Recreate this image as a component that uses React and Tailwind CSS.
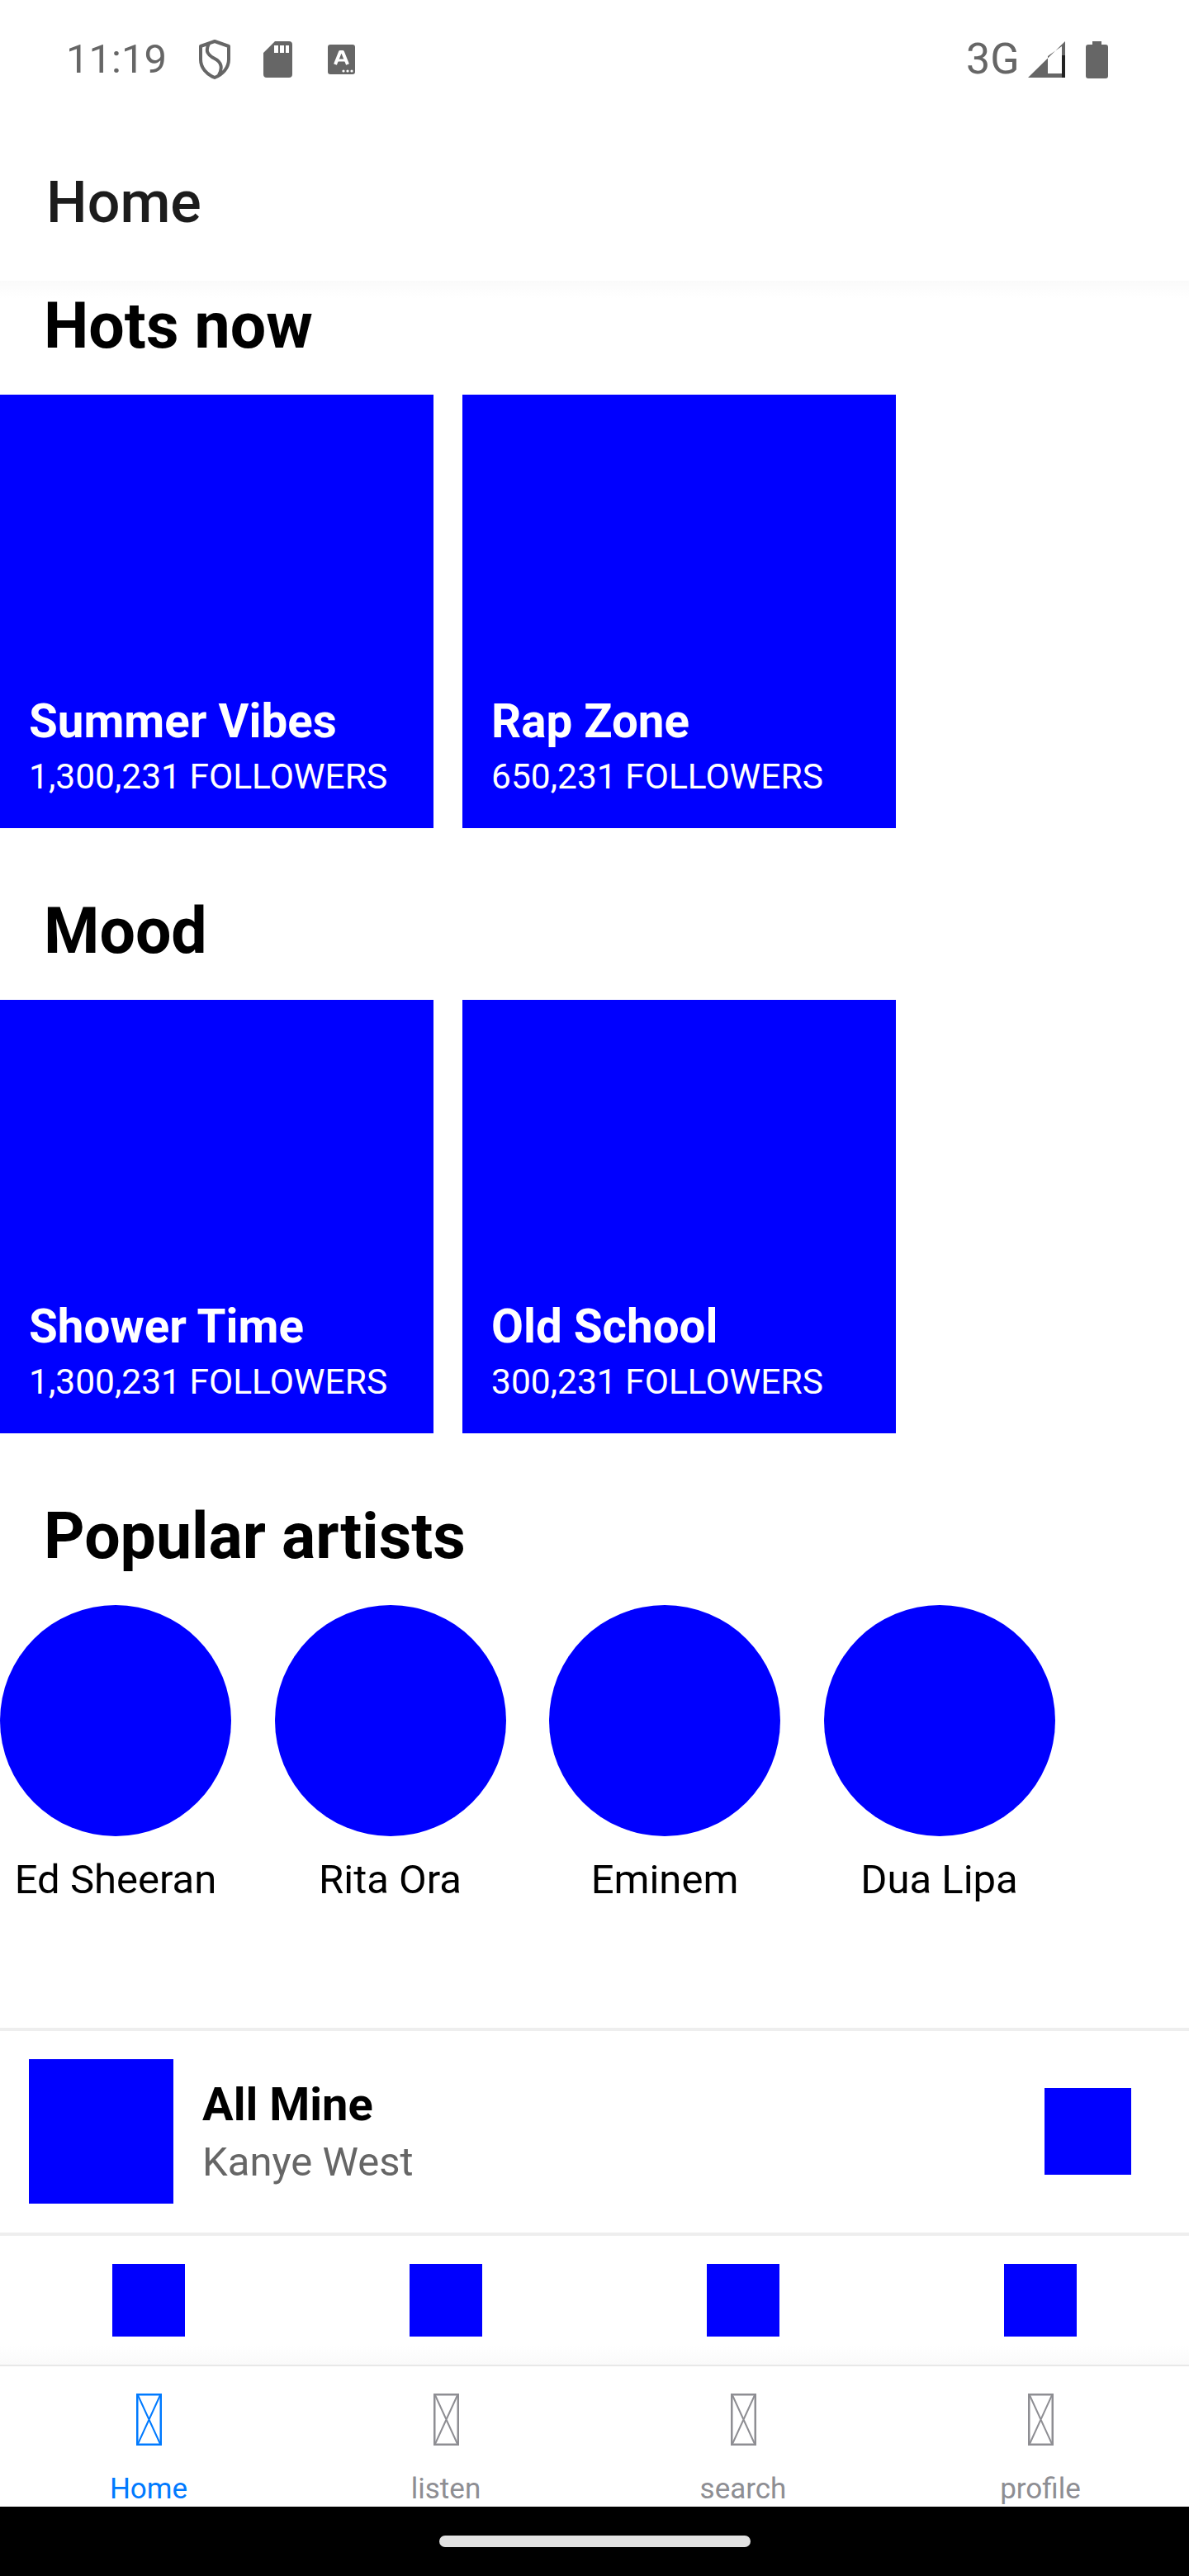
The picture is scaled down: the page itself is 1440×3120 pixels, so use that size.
import React from "react";

const hots = [
  { name: "Summer Vibes", followers: "1,300,231 FOLLOWERS" },
  { name: "Rap Zone", followers: "650,231 FOLLOWERS" },
];
const mood = [
  { name: "Shower Time", followers: "1,300,231 FOLLOWERS" },
  { name: "Old School", followers: "300,231 FOLLOWERS" },
];
const artists = ["Ed Sheeran", "Rita Ora", "Eminem", "Dua Lipa"];
const tabs = ["Home", "listen", "search", "profile"];

function StatusBar() {
  return (
    <div className="h-[97px] flex items-end text-[#666666]">
      <div className="w-full h-[50px] flex items-center justify-between pl-[80px] pr-[98px]">
        <div className="flex items-center">
          <span className="text-[49px] leading-[50px] w-[160px]">11:19</span>
          {/* shield */}
          <svg width="40" height="48" viewBox="0 0 40 48" fill="none">
            <path d="M20 2 L37 8 V24 C37 34 30 42 20 46 C10 42 3 34 3 24 V8 Z" stroke="#666666" strokeWidth="4" strokeLinejoin="round" />
            <path d="M13 5 C8 14 12 19 20 23 C28 27 30 34 25 43" stroke="#666666" strokeWidth="4" />
          </svg>
          {/* sd card */}
          <svg className="ml-[39px]" width="35" height="44" viewBox="0 0 35 44">
            <path fill="#666666" fillRule="evenodd" d="M14 0 H31 Q35 0 35 4 V40 Q35 44 31 44 H4 Q0 44 0 40 V14 Z M13 5 V14 H18 V5 Z M20 5 V14 H25 V5 Z M27 5 V14 H31 V5 Z" />
          </svg>
          {/* keyboard A */}
          <svg className="ml-[43px]" width="33" height="36" viewBox="0 0 33 36">
            <rect width="33" height="36" rx="3" fill="#666666" />
            <path d="M9 24 L15 9 H18 L24 24" stroke="#ffffff" strokeWidth="4" fill="none" strokeLinejoin="round" />
            <path d="M11 19 H22" stroke="#ffffff" strokeWidth="3" />
            <circle cx="19" cy="32" r="1.6" fill="#ffffff" />
            <circle cx="24" cy="32" r="1.6" fill="#ffffff" />
            <circle cx="29" cy="32" r="1.6" fill="#ffffff" />
          </svg>
        </div>
        <div className="flex items-center">
          <span className="text-[52px] leading-[50px] w-[75px]">3G</span>
          <svg width="45" height="44" viewBox="0 0 45 44">
            <path fill="#666666" d="M45 0 V44 H0 Z M24 18 V39 H41 V6 Z" fillRule="evenodd" />
            <rect x="41" y="17" width="4" height="27" fill="#222222" />
          </svg>
          <svg className="ml-[25px]" width="27" height="45" viewBox="0 0 27 45">
            <path fill="#666666" d="M8 0 H19 V4 H24 Q27 4 27 7 V42 Q27 45 24 45 H3 Q0 45 0 42 V7 Q0 4 3 4 H8 Z" />
          </svg>
        </div>
      </div>
    </div>
  );
}

function PlaylistRow({ items }) {
  return (
    <div className="flex gap-[35px]">
      {items.map((item) => (
        <div key={item.name} className="w-[525px] h-[525px] bg-[#0000ff] text-white flex flex-col justify-end pl-[35px] pb-[32px]">
          <div className="text-[56.5px] leading-[70px] font-bold">{item.name}</div>
          <div className="text-[42.5px] leading-[60px] mt-[2px]">{item.followers}</div>
        </div>
      ))}
    </div>
  );
}

function SectionTitle({ children, first }) {
  return (
    <h2 className={`${first ? "pt-[1px]" : "pt-[71px]"} pb-[29px] pl-[53px] text-[77px] leading-[108px] font-bold text-black`}>
      {children}
    </h2>
  );
}

function BrokenIcon({ color }) {
  return (
    <svg width="31" height="63" viewBox="0 0 31 63" fill="none" stroke={color}>
      <rect x="1.25" y="1.25" width="28.5" height="60.5" strokeWidth="2.5" />
      <path d="M2 2 L29 61 M29 2 L2 61" strokeWidth="2" />
    </svg>
  );
}

export default function App() {
  return (
    <div className="w-[1440px] h-[3120px] bg-white flex flex-col overflow-hidden font-['Roboto',sans-serif]">
      <StatusBar />
      <div className="h-[243px] pl-[56px] pt-[100px]">
        <div className="text-[70px] leading-[96px] font-medium text-[#1c1c1c]">Home</div>
      </div>

      <div className="h-[2116px] bg-gradient-to-b from-[#fafafa] to-white to-[1%]">
        <SectionTitle first>Hots now</SectionTitle>
        <PlaylistRow items={hots} />
        <SectionTitle>Mood</SectionTitle>
        <PlaylistRow items={mood} />
        <SectionTitle>Popular artists</SectionTitle>
        <div className="flex gap-[52.5px]">
          {artists.map((a) => (
            <div key={a} className="w-[280px] flex flex-col items-center">
              <div className="w-[280px] h-[280px] rounded-full bg-[#0000ff]" />
              <div className="mt-[23px] text-[49px] leading-[60px] text-black">{a}</div>
            </div>
          ))}
        </div>
      </div>

      {/* now playing */}
      <div className="h-[252px] border-y-[4px] border-[#eeeeee] flex items-center pl-[35px] pr-[70px] pb-[2px]">
        <div className="w-[175px] h-[175px] bg-[#0000ff]" />
        <div className="ml-[35px] flex-1 pt-[6px]">
          <div className="text-[56px] leading-[70px] font-bold text-black">All Mine</div>
          <div className="text-[49px] leading-[70px] text-[#666666]">Kanye West</div>
        </div>
        <div className="w-[105px] h-[105px] bg-[#0000ff]" />
      </div>

      {/* controls */}
      <div className="h-[156px] grid grid-cols-4 justify-items-center items-center bg-gradient-to-b from-white from-[85%] to-[#fafafa]">
        {[0, 1, 2, 3].map((i) => (
          <div key={i} className="w-[88px] h-[88px] bg-[#0000ff]" />
        ))}
      </div>

      {/* tabs */}
      <div className="h-[172px] border-t-[2px] border-[#e8e8e8] grid grid-cols-4 overflow-hidden">
        {tabs.map((t, i) => (
          <div key={t} className="flex flex-col items-center pt-[33px]">
            <BrokenIcon color={i === 0 ? "#007aff" : "#8e8e93"} />
            <div className={`mt-[29px] text-[35px] leading-[48px] ${i === 0 ? "text-[#007aff]" : "text-[#8e8e93]"}`}>{t}</div>
          </div>
        ))}
      </div>

      {/* android nav */}
      <div className="h-[84px] bg-black flex justify-center pt-[35px]">
        <div className="w-[377px] h-[14px] rounded-full bg-[#e2e2e2]" />
      </div>
    </div>
  );
}
